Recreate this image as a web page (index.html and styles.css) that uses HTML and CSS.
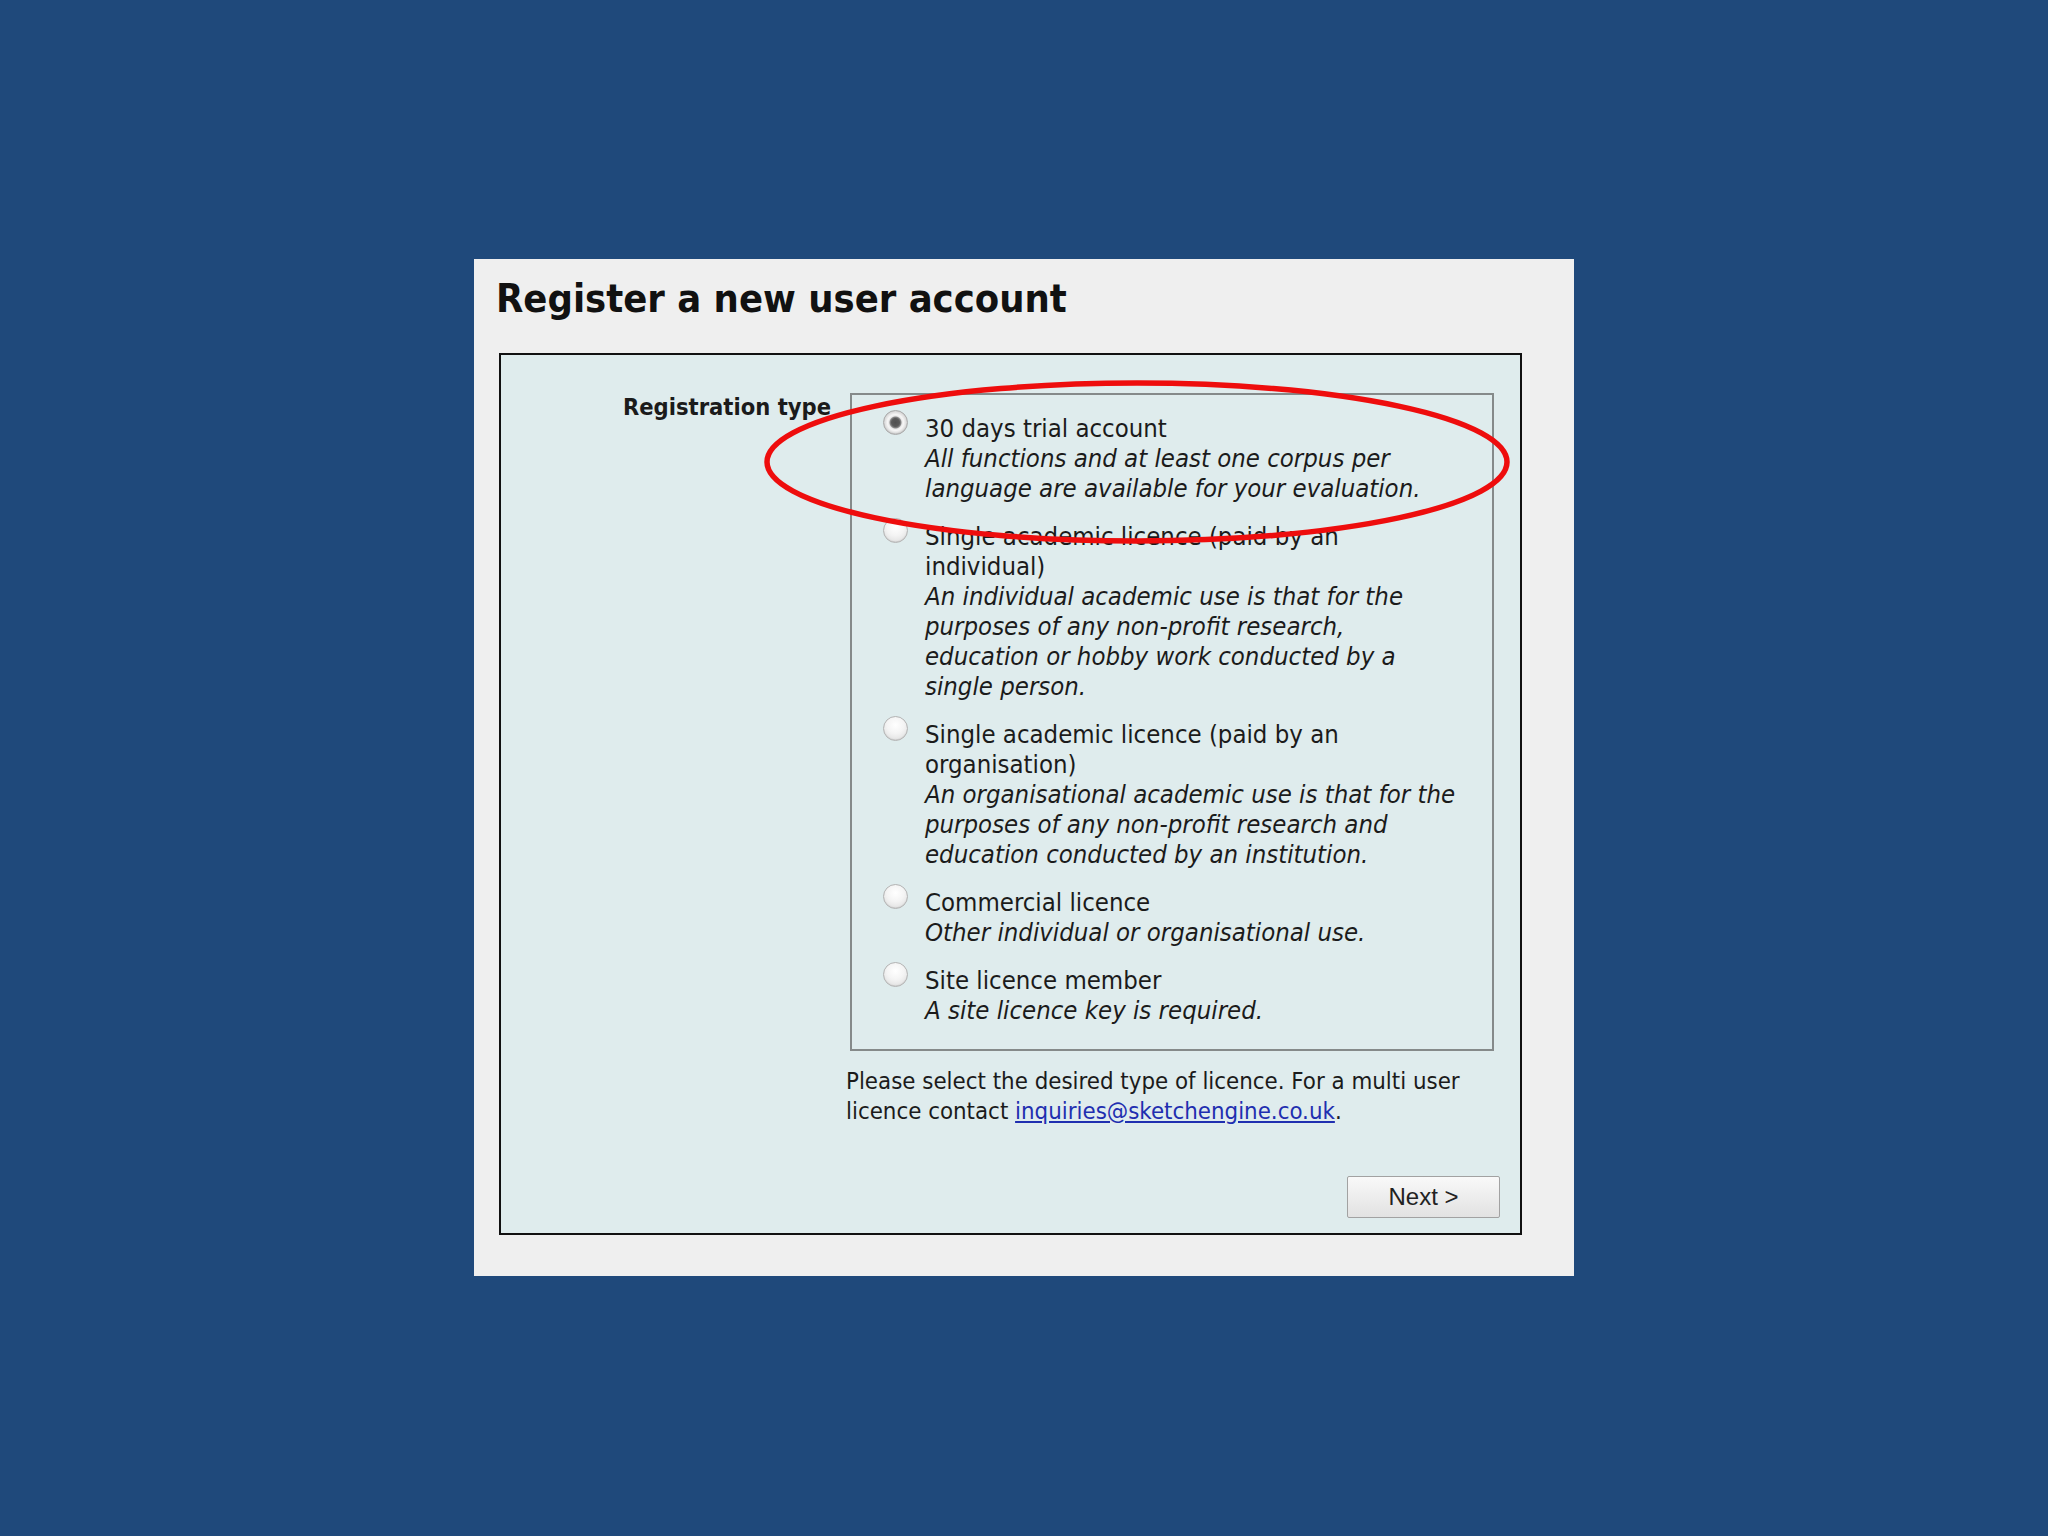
FILE: index.html
```
<!DOCTYPE html>
<html lang="en">
<head>
<meta charset="utf-8">
<title>Register a new user account</title>
<link rel="stylesheet" href="styles.css">
</head>
<body>
<div class="panel">
  <h1 class="title">Register a new user account</h1>
  <form class="box">
    <div class="form-row">
      <div class="label">Registration type</div>
      <div class="field">
        <fieldset class="options">
          <label class="option">
            <input type="radio" name="regtype" checked>
            <span class="option-text">
              <span class="name">30 days trial account</span>
              <em class="desc">All functions and at least one corpus per<br>language are available for your evaluation.</em>
            </span>
          </label>
          <label class="option">
            <input type="radio" name="regtype">
            <span class="option-text">
              <span class="name">Single academic licence (paid by an<br>individual)</span>
              <em class="desc">An individual academic use is that for the<br>purposes of any non-profit research,<br>education or hobby work conducted by a<br>single person.</em>
            </span>
          </label>
          <label class="option">
            <input type="radio" name="regtype">
            <span class="option-text">
              <span class="name">Single academic licence (paid by an<br>organisation)</span>
              <em class="desc">An organisational academic use is that for the<br>purposes of any non-profit research and<br>education conducted by an institution.</em>
            </span>
          </label>
          <label class="option">
            <input type="radio" name="regtype">
            <span class="option-text">
              <span class="name">Commercial licence</span>
              <em class="desc">Other individual or organisational use.</em>
            </span>
          </label>
          <label class="option">
            <input type="radio" name="regtype">
            <span class="option-text">
              <span class="name">Site licence member</span>
              <em class="desc">A site licence key is required.</em>
            </span>
          </label>
        </fieldset>
        <p class="help">Please select the desired type of licence. For a multi user<br>licence contact <a href="#">inquiries@sketchengine.co.uk</a>.</p>
      </div>
    </div>
    <div class="actions">
      <button type="button" class="next">Next &gt;</button>
    </div>
  </form>
  <svg class="highlight" width="746" height="164" viewBox="0 0 746 164" aria-hidden="true">
    <ellipse cx="373" cy="82" rx="370" ry="79" fill="none" stroke="#ee0d0d" stroke-width="5.5"/>
  </svg>
</div>
</body>
</html>
```
FILE: styles.css
```
html, body {
  margin: 0;
  padding: 0;
}
body {
  background: #1f497b;
  font-family: "DejaVu Sans Condensed", "DejaVu Sans", sans-serif;
  color: #1b1b1b;
  min-height: 1536px;
  padding-top: 259px;
  box-sizing: border-box;
}
.panel {
  position: relative;
  width: 1100px;
  height: 1017px;
  margin: 0 auto;
  background: #efefef;
  box-sizing: border-box;
  padding: 0 52px 0 25px;
}
.title {
  margin: 0 0 0 -3px;
  padding: 14px 0 0 0;
  height: 94px;
  box-sizing: border-box;
  font-size: 39.5px;
  font-weight: bold;
  color: #111;
  line-height: 50px;
}
.box {
  border: 2px solid #111;
  background: #dfeced;
  padding: 38px 0 15px 0;
  height: 882px;
  box-sizing: border-box;
  display: flex;
  flex-direction: column;
}
.form-row {
  display: grid;
  grid-template-columns: 330px 644px;
  column-gap: 19px;
  flex: 1;
}
.label {
  text-align: right;
  font-weight: bold;
  font-size: 23.5px;
  line-height: 30px;
  padding-top: 0;
  margin-top: -1px;
}
.options {
  margin: 0;
  border: 2px solid #858a8a;
  padding: 18px 10px 24px 31px;
  display: flex;
  flex-direction: column;
  gap: 18px;
}
.option {
  display: flex;
  align-items: flex-start;
  gap: 17px;
  font-size: 25.5px;
  line-height: 30px;
}
.option input {
  appearance: none;
  -webkit-appearance: none;
  margin: -3px 0 0 0;
  width: 25px;
  height: 25px;
  flex: none;
  border-radius: 50%;
  border: 1px solid #b3b3b3;
  background: radial-gradient(circle at 50% 35%, #ffffff 0%, #f4f4f4 45%, #d9d9d9 100%);
  box-shadow: inset 0 -1px 1px rgba(0,0,0,0.08);
  box-sizing: border-box;
}
.option input:checked {
  border-color: #a9a9a9;
  background: radial-gradient(circle, #505050 0, #5a5a5a 4px, #8a8a8a 5.5px, #e8e8e8 6.5px, #f6f6f6 8px, #d0d0d0 12px);
}
.option-text {
  display: flex;
  flex-direction: column;
  white-space: nowrap;
}
.desc {
  font-style: italic;
}
.help {
  margin: 15px 0 0 -4px;
  font-size: 23.8px;
  line-height: 30px;
}
.help a {
  color: #1f2fb0;
  text-decoration: underline;
}
.actions {
  display: flex;
  justify-content: flex-end;
  padding-right: 20px;
}
.next {
  width: 153px;
  height: 42px;
  border: 1px solid #a2a2a2;
  border-radius: 2px;
  background: linear-gradient(#f9f9f9, #ececec 55%, #e2e2e2);
  font-family: "Liberation Sans", Arial, sans-serif;
  font-size: 24px;
  color: #222;
  padding: 0;
}
.highlight {
  position: absolute;
  left: 290px;
  top: 121px;
}
```
